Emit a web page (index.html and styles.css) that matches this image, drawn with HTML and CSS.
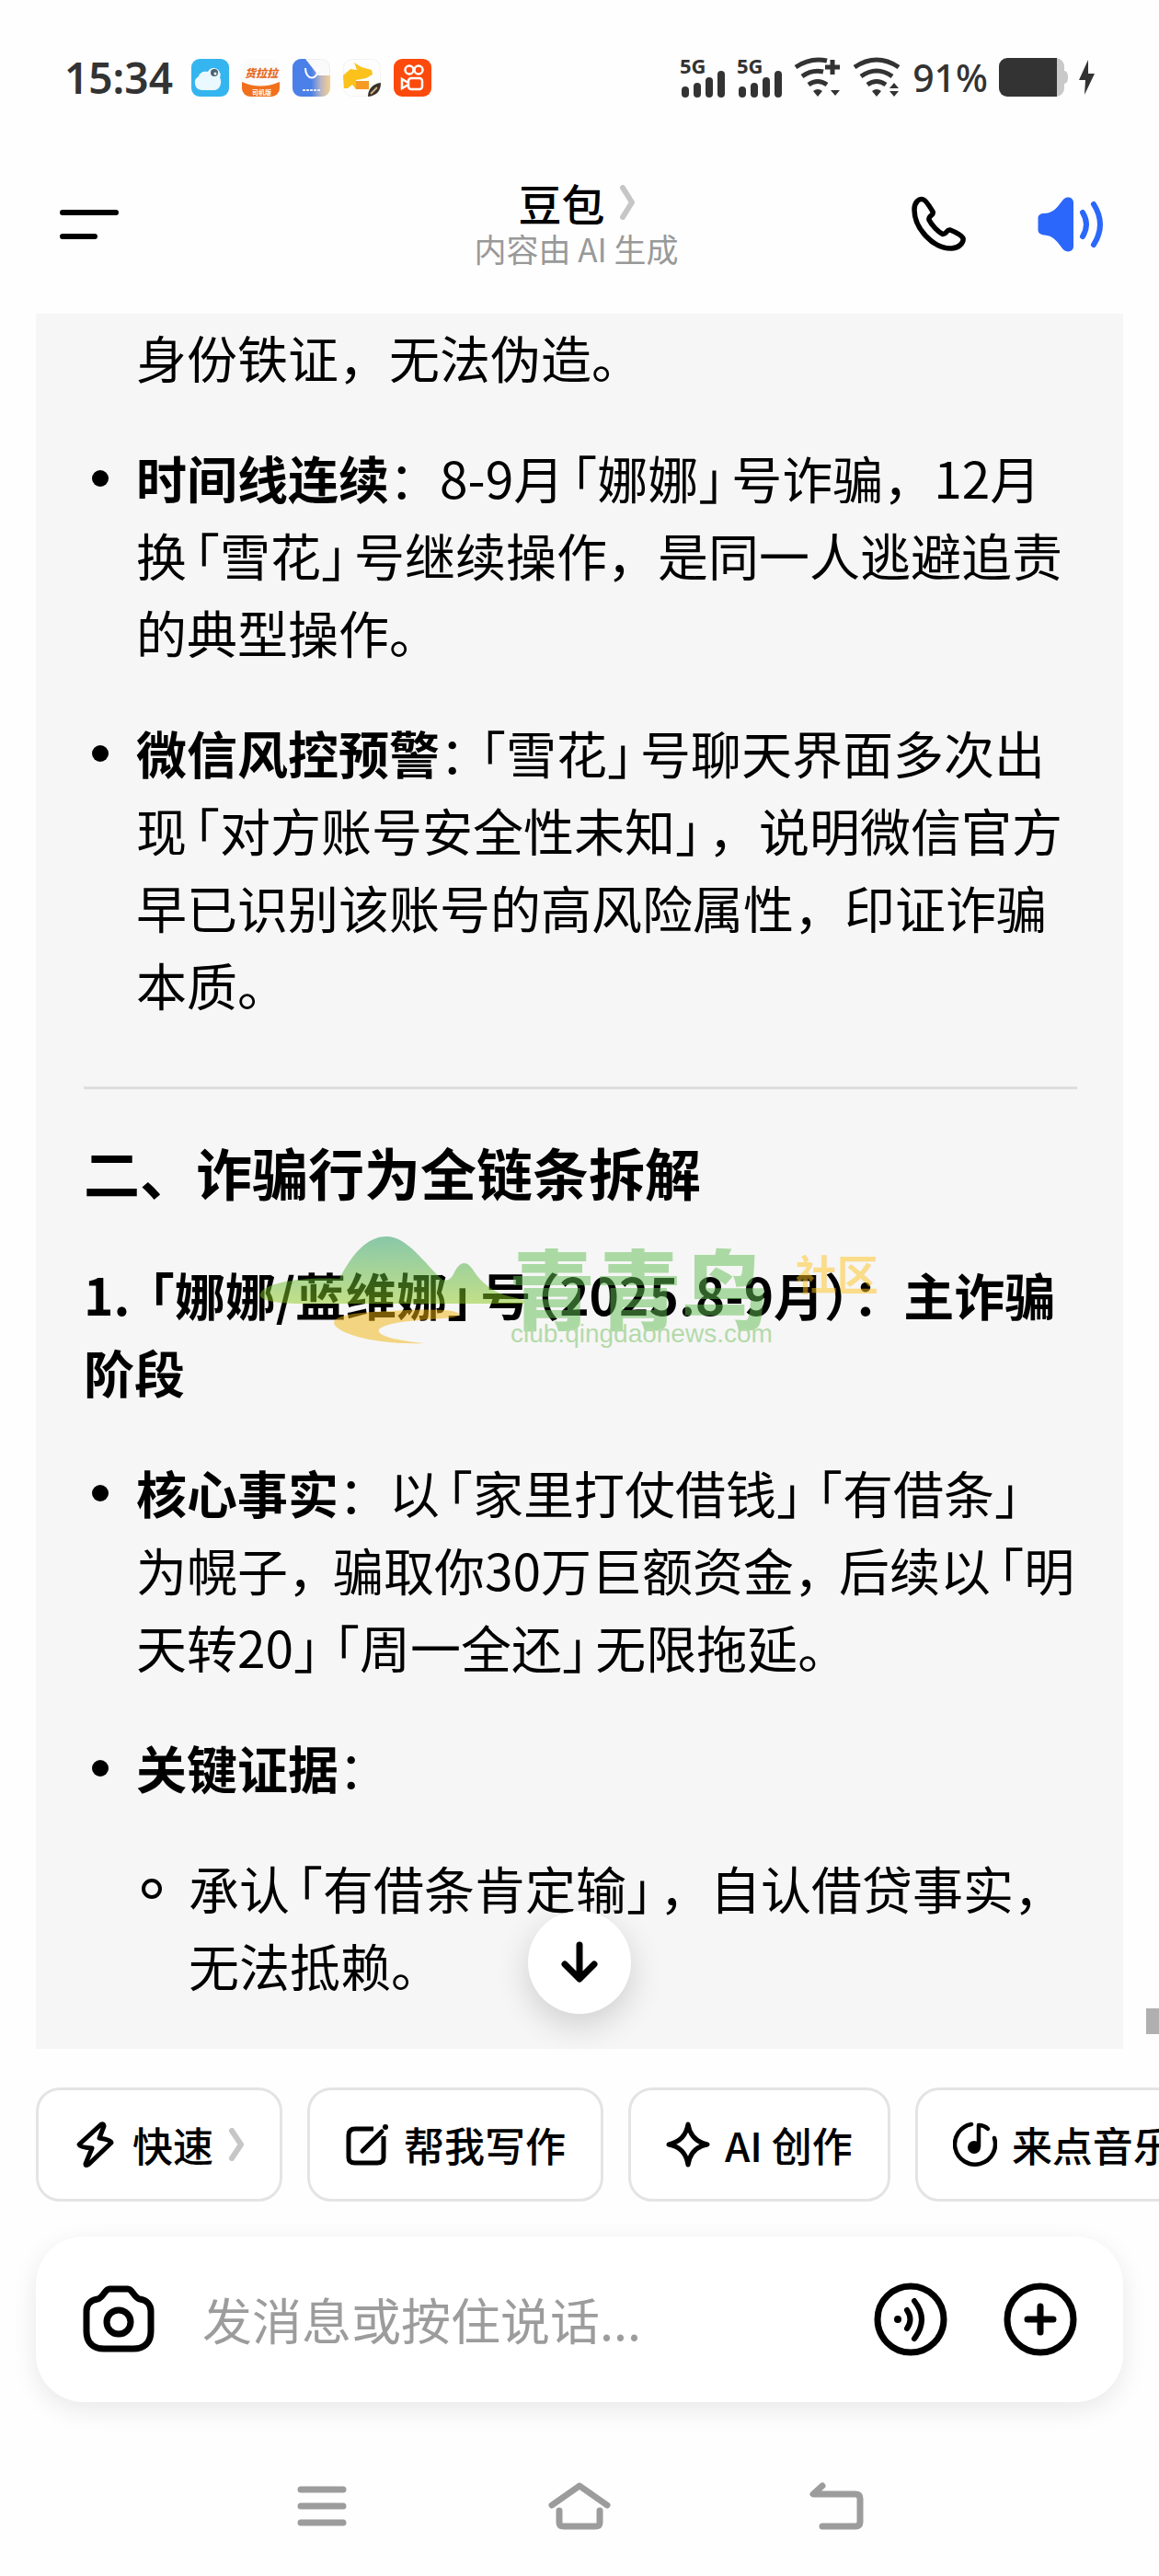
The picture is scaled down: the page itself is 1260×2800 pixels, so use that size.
FILE: index.html
```html
<!DOCTYPE html>
<html lang="zh-CN">
<head>
<meta charset="utf-8">
<meta name="viewport" content="width=device-width, initial-scale=1">
<title>豆包</title>
<link rel="stylesheet" href="styles.css">
</head>
<body>
<div class="app">
  <div class="status">
    <div class="status-group">
      <span class="clock">15:34</span>
      <div class="apps">
        <svg class="app-icon" viewBox="0 0 41 41"><rect width="41" height="41" rx="9" fill="#35b5ef"/><path d="M12 34a8 8 0 0 1-4-15c1-4 5-6 10-5a7 7 0 0 1 13 1c1 2 1 3 0 5 3 6 0 13-5 14z" fill="#eaf8ff"/><circle cx="25" cy="15" r="4" fill="#4b6370"/><circle cx="26" cy="16" r="1.500" fill="#fff"/></svg>
        <svg class="app-icon" viewBox="0 0 41 41"><defs><clipPath id="c1"><rect width="41" height="41" rx="9"/></clipPath></defs><g clip-path="url(#c1)"><rect width="41" height="41" fill="#fbfbfb"/><path d="M0 25Q20 34 41 25V41H0z" fill="#f0701c"/><text x="3" y="20" class="tiny-a">货拉拉</text><text x="11" y="39" class="tiny-b">司机版</text></g></svg>
        <svg class="app-icon" viewBox="0 0 41 41"><defs><linearGradient id="g1" x1="0" y1="0" x2="1" y2="0"><stop offset="0.500" stop-color="#4a80e8"/><stop offset="0.750" stop-color="#b9b5c4"/><stop offset="1" stop-color="#f9cf8c"/></linearGradient></defs><rect x="0.500" y="0.500" width="40" height="40" rx="9" fill="#fafafa" stroke="#eee"/><path d="M9 0H14L28 18H41V32a9 9 0 0 1-9 9H9a9 9 0 0 1-9-9V9a9 9 0 0 1 9-9z" fill="url(#g1)"/><path d="M14 10C14 24 28 24 28 10" fill="none" stroke="#fff" stroke-width="2"/><path d="M11 34H31" stroke="#dfe8fa" stroke-width="2" stroke-dasharray="3 1"/></svg>
        <svg class="app-icon" viewBox="0 0 41 41"><rect x="0.500" y="0.500" width="40" height="40" rx="9" fill="#fdfdfd" stroke="#f3f3f3"/><path d="M0 18 8 11 15 12 12 4 20 9 31 12 32 17 25 21 14 23V33L10 28 5 32H1z" fill="#fbc21c"/><path d="M14 24H28V33H14z" fill="#f59a22"/><path d="M27 41C27 33 32 27 41 26 41 34 37 40 27 41z" fill="#3a3026"/><path d="M30 38 37 31" stroke="#c9b48c" stroke-width="2"/></svg>
        <svg class="app-icon" viewBox="0 0 41 41"><rect width="41" height="41" rx="9" fill="#fb4a0c"/><g fill="none" stroke="#fff" stroke-width="2.500"><circle cx="17" cy="12" r="4.500"/><circle cx="27" cy="12" r="4.500"/><rect x="16" y="21" width="15" height="12" rx="3"/><path d="M16 26 9 22V32L16 28"/></g></svg>
      </div>
    </div>
    <div class="status-group signals">
      <svg width="50" height="44" viewBox="0 0 50 44"><text x="0" y="18" class="net">5G</text><path d="M6 36V40M19 32V40M32 26V40M45 19V40" stroke="#333" stroke-width="8" stroke-linecap="round"/></svg>
      <svg width="50" height="44" viewBox="0 0 50 44"><text x="0" y="18" class="net">5G</text><path d="M6 36V40M19 32V40M32 26V40M45 19V40" stroke="#333" stroke-width="8" stroke-linecap="round"/></svg>
      <svg width="52" height="44" viewBox="0 0 52 44"><g fill="none" stroke="#333" stroke-width="5"><path d="M2 11Q18 0 36 4M9 21Q20 13 32 16M16 30Q26 23 36 30M34 11H50M42 3V19"/></g><path d="M21 37Q26 33 31 37L26 43zM40 36H50L45 42z" fill="#333"/></svg>
      <svg width="53" height="44" viewBox="0 0 53 44"><g fill="none" stroke="#333" stroke-width="5"><path d="M2 11Q26-5 50 11M9 21Q26 9 43 21M16 30Q26 23 36 30"/></g><path d="M21 37Q26 33 31 37L26 43zM40 34 45 28 50 34zM40 37H50L45 43z" fill="#333"/></svg>
      <span class="percent">91%</span>
      <svg width="75" height="42" viewBox="0 0 75 42"><path d="M58 0h4a9 9 0 0 1 9 9v5q4 0 4 7t-4 7v5a9 9 0 0 1-9 9h-4z" fill="#c9c9c9"/><path d="M9 0H63V42H9a9 9 0 0 1-9-9V9a9 9 0 0 1 9-9z" fill="#333"/></svg>
      <svg width="17" height="38" viewBox="0 0 17 38"><path d="M10 0 0 22H7L6 38 17 15H10z" fill="#333"/></svg>
    </div>
  </div>

  <header class="topbar">
    <button class="icon-btn" aria-label="菜单"><svg width="64" height="34" viewBox="0 0 64 34"><path d="M3 4H61M3 30H38" stroke="#000" stroke-width="6" stroke-linecap="round"/></svg></button>
    <div class="heading">
      <h1 class="name">豆包<svg width="16" height="38" viewBox="0 0 16 38"><path d="M3 3 13 19 3 35" fill="none" stroke="#c6c6c6" stroke-width="6" stroke-linecap="round" stroke-linejoin="round"/></svg></h1>
      <p class="sub">内容由 AI 生成</p>
    </div>
    <div class="actions">
      <button class="icon-btn" aria-label="通话"><svg width="64" height="64" viewBox="0 0 64 64"><path d="M6 16C6 8 11 3 16 5 19 6 23 13 26 18 28 22 21 22 22 27 25 33 32 40 37 42.500 41 43 41 37 45 38 50 40 57 43 59 47 60 52 54 58 46 58 26 58 6 36 6 16z" fill="none" stroke="#000" stroke-width="5.500" stroke-linejoin="round"/></svg></button>
      <button class="icon-btn" aria-label="朗读"><svg width="76" height="64" viewBox="0 0 76 64"><path d="M9 20C22 20 26 8 31 4 35 1 41 3 41 8V56C41 61 35 63 31 60 26 56 22 44 9 43.500 5 43 2.500 41 2.500 38V25C2.500 22 5 20 9 20z" fill="#2b67fa"/><path d="M51 19Q59 32 51 45M63 10Q77 32 63 54" fill="none" stroke="#2b67fa" stroke-width="6" stroke-linecap="round"/></svg></button>
    </div>
  </header>

  <main class="stage">
    <article class="panel">
      <p class="lead">身份铁证，无法伪造。</p>
      <ul class="list">
        <li><strong>时间线连续</strong>：8-9月<span class="ob">「</span>娜娜<span class="cb">」</span>号诈骗，12月换<span class="ob">「</span>雪花<span class="cb">」</span>号继续操作，是同一人逃避追责的典型操作。</li>
        <li><strong>微信风控预警</strong><span class="cb">：</span><span class="ob">「</span>雪花<span class="cb">」</span>号聊天界面多次出现<span class="ob">「</span>对方账号安全性未知<span class="cb">」</span>，说明微信官方早已识别该账号的高风险属性，印证诈骗本质。</li>
      </ul>
      <hr class="rule">
      <h2 class="h2">二、诈骗行为全链条拆解</h2>
      <h3 class="h3">1. <span class="ob">「</span>娜娜/蓝维娜<span class="cb">」</span>号<span class="op">（</span>2025.8-9月<span class="cp">）</span>：主诈骗阶段</h3>
      <ul class="list">
        <li><strong>核心事实</strong>：以<span class="ob">「</span>家里打仗借钱<span class="cb">」</span><span class="ob">「</span>有借条<span class="cb">」</span><br>为幌子<span class="cm">，</span>骗取你30万巨额资金<span class="cm">，</span>后续以<span class="ob">「</span>明天转20<span class="cb">」</span><span class="ob">「</span>周一全还<span class="cb">」</span>无限拖延。</li>
        <li><strong>关键证据</strong>：
          <ul class="list sublist">
            <li>承认<span class="ob">「</span>有借条肯定输<span class="cb">」</span>，自认借贷事实，无法抵赖。</li>
          </ul>
        </li>
      </ul>
      <svg class="watermark" width="690" height="130" viewBox="0 0 690 130">
        <defs><linearGradient id="wm" x1="0" y1="0" x2="0" y2="1"><stop offset="0" stop-color="#1f9a5e"/><stop offset="1" stop-color="#8fcb1c"/></linearGradient></defs>
        <path d="M8 62C18 53 50 47 92 49 106 22 122 3 143 3 166 3 184 32 204 50Q211 53 216 44C223 29 230 29 237 39 243 49 256 62 270 66 282 70 296 72 304 76H44Q-4 74 8 62z" fill="url(#wm)"/>
        <path d="M148 84Q215 80 222 87C224 93 190 92 160 96 118 102 130 114 184 119 130 121 88 108 86 97 86 88 116 85 148 84z" fill="#f2b40c"/>
        <text x="276" y="97" class="wm-name">青青鸟</text>
        <text x="588" y="62" class="wm-side">社区</text>
        <text x="278" y="118" class="wm-url">club.qingdaonews.com</text>
      </svg>
    </article>
    <button class="jump" aria-label="回到底部"><svg width="40" height="46" viewBox="0 0 40 46"><path d="M20 4V40M4 25 20 41 36 25" fill="none" stroke="#000" stroke-width="7" stroke-linecap="round" stroke-linejoin="round"/></svg></button>
    <span class="thumb"></span>
  </main>

  <div class="chips">
    <button class="chip"><svg width="48" height="52" viewBox="0 0 48 52"><path d="M30 4 6 26Q7 29 20 30L13 47Q13 50 17 47L41 24Q41 21 28 19L33 6Q33 3 30 4z" fill="none" stroke="#000" stroke-width="5" stroke-linejoin="round"/></svg>快速<svg width="18" height="36" viewBox="0 0 18 36"><path d="M4 3 14 18 4 33" fill="none" stroke="#c6c6c6" stroke-width="6" stroke-linecap="round" stroke-linejoin="round"/></svg></button>
    <button class="chip"><svg width="48" height="52" viewBox="0 0 48 52"><path d="M31 9H11Q4 9 4 16V40Q4 46 11 46H35Q42 46 42 40V17" fill="none" stroke="#000" stroke-width="5"/><path d="M19 33 40 12" stroke="#000" stroke-width="5" stroke-linecap="round"/><circle cx="44" cy="7" r="3" /></svg>帮我写作</button>
    <button class="chip"><svg width="48" height="52" viewBox="0 0 48 52"><path d="M24 4Q27 22 45 26 27 29 24 48 21 29 3 26 21 22 24 4z" fill="none" stroke="#000" stroke-width="5" stroke-linejoin="round"/></svg>AI 创作</button>
    <button class="chip"><svg width="48" height="52" viewBox="0 0 48 52"><path d="M20 4A22 22 0 1 0 45 19" fill="none" stroke="#000" stroke-width="4.500" stroke-linecap="round"/><circle cx="23" cy="29" r="7"/><path d="M28 28V5Q34 5 38 9" fill="none" stroke="#000" stroke-width="4.500" stroke-linecap="round" stroke-linejoin="round"/></svg>来点音乐</button>
  </div>

  <form class="composer">
    <button type="button" class="icon-btn" aria-label="拍照"><svg width="80" height="80" viewBox="0 0 80 80"><g fill="none" stroke="#000" stroke-width="7"><path d="M30 7H50C55 7 57 17 63 18 70 19 75 24 75 31V53C75 65 68 72 56 72H24C12 72 5 65 5 53V31C5 24 10 19 17 18 23 17 25 7 30 7Z"/><circle cx="40" cy="43" r="13"/></g></svg></button>
    <input class="field" type="text" aria-label="发消息" placeholder="发消息或按住说话...">
    <button type="button" class="icon-btn" aria-label="语音"><svg width="80" height="80" viewBox="0 0 80 80"><circle cx="40" cy="40" r="36" fill="none" stroke="#000" stroke-width="7"/><circle cx="26" cy="40" r="4"/><path d="M36 30Q43 40 36 50M44 20Q60 40 44 61" fill="none" stroke="#000" stroke-width="6" stroke-linecap="round"/></svg></button>
    <button type="button" class="icon-btn" aria-label="更多"><svg width="80" height="80" viewBox="0 0 80 80"><circle cx="40" cy="40" r="36" fill="none" stroke="#000" stroke-width="7"/><path d="M40 26V54M26 40H54" stroke="#000" stroke-width="7" stroke-linecap="round"/></svg></button>
  </form>

  <nav class="sysnav">
    <button class="icon-btn" aria-label="最近任务"><svg width="72" height="54" viewBox="0 0 72 54"><path d="M13 9H59M13 27H59M13 45H59" stroke="#9c9c9c" stroke-width="7" stroke-linecap="round"/></svg></button>
    <button class="icon-btn" aria-label="主页"><svg width="72" height="54" viewBox="0 0 72 54"><path d="M6 26 36 5 66 26M14 32V45Q14 49 19 49H53Q58 49 58 45V32" fill="none" stroke="#9c9c9c" stroke-width="7" stroke-linecap="round" stroke-linejoin="round"/></svg></button>
    <button class="icon-btn" aria-label="返回"><svg width="72" height="54" viewBox="0 0 72 54"><path d="M20 5 10 14H56Q61 14 61 19V44Q61 49 56 49H20" fill="none" stroke="#9c9c9c" stroke-width="7" stroke-linecap="round" stroke-linejoin="round"/></svg></button>
  </nav>
</div>
</body>
</html>
```
FILE: styles.css
```css
*,
*::before {
  box-sizing: border-box;
  margin: 0;
  padding: 0;
}

body {
  background: #fefefe;
  color: #000;
  font-family: "Noto Sans CJK SC", sans-serif;
  overflow-x: hidden;
}

button {
  border: 0;
  background: none;
  color: inherit;
  font: inherit;
}

svg {
  display: block;
  flex: none;
}

.app {
  display: flex;
  flex-direction: column;
  min-height: 100vh;
}

/* system status bar */
.status {
  display: flex;
  justify-content: space-between;
  align-items: center;
  padding: 50px 70px 48px;
  color: #333;
  font-family: "Noto Sans", sans-serif;
}

.status-group {
  display: flex;
  align-items: center;
  gap: 20px;
}

.clock {
  font-size: 46px;
  line-height: 68px;
  font-weight: 600;
}

.percent {
  font-size: 41px;
  line-height: 68px;
  font-weight: 500;
}

.apps {
  display: flex;
  gap: 14px;
}

.app-icon {
  width: 41px;
  height: 41px;
}

.signals {
  gap: 12px;
}

.net {
  font: 700 22px/1 "Noto Sans", sans-serif;
  fill: #333;
}

.tiny-a {
  font: italic 900 12px "Noto Sans CJK SC", sans-serif;
  fill: #e5691e;
}

.tiny-b {
  font: 700 7px "Noto Sans CJK SC", sans-serif;
  fill: #fff;
}

/* chat title bar */
.topbar {
  display: grid;
  grid-template-columns: 1fr auto 1fr;
  align-items: center;
  padding: 24px 58px 43px 65px;
}

.icon-btn {
  flex: none;
  justify-self: start;
}

.heading {
  display: flex;
  flex-direction: column;
  align-items: center;
  padding-right: 14px;
}

.name {
  display: flex;
  align-items: center;
  gap: 16px;
  font-size: 47px;
  line-height: 60px;
  font-weight: 500;
}

.sub {
  padding-bottom: 8px;
  font-size: 35px;
  line-height: 40px;
  color: #999;
}

.actions {
  display: flex;
  justify-content: flex-end;
  align-items: center;
  gap: 74px;
}

/* conversation */
.stage {
  position: relative;
  padding: 0 39px;
}

.panel {
  position: relative;
  padding: 4px 40px 50px 52px;
  background: #f6f6f6;
  font-size: 55px;
  line-height: 84px;
  text-spacing-trim: space-all;
}

.lead {
  padding-left: 57px;
}

.list {
  list-style: none;
  padding-left: 57px;
}

.list > li {
  position: relative;
  margin-top: 47px;
}

.list > li::before {
  content: "";
  position: absolute;
  left: -48px;
  top: 35px;
  width: 18px;
  height: 18px;
  border-radius: 50%;
  background: #000;
}

.sublist > li::before {
  left: -51px;
  top: 33px;
  width: 22px;
  height: 22px;
  border: 4px solid #000;
  background: none;
}

strong {
  font-weight: 700;
}

/* punctuation set narrower than a full character */
.ob {
  margin-left: -19px;
}

.cb {
  margin-right: -19px;
}

.op {
  margin-left: -24px;
}

.cp {
  margin-right: -24px;
}

.cm {
  margin-right: -6px;
}

.rule {
  height: 3px;
  margin: 70px 10px 0 0;
  border: 0;
  background: #dedede;
}

.h2 {
  margin-top: 44px;
  font-size: 61px;
  line-height: 92px;
  font-weight: 700;
}

.h3 {
  margin-top: 44px;
  font-size: 55px;
  line-height: 84px;
  font-weight: 700;
}

.watermark {
  position: absolute;
  left: 238px;
  top: 1000px;
  opacity: 0.5;
  pointer-events: none;
}

.wm-name {
  font: 900 94px/1 "Noto Sans CJK SC", sans-serif;
  fill: #62bd52;
}

.wm-side {
  font: 700 45px/1 "Noto Sans CJK SC", sans-serif;
  fill: #ffc31f;
}

.wm-url {
  font: 400 28px/1 "Liberation Sans", sans-serif;
  fill: #72c05c;
}

.jump {
  position: absolute;
  left: 50%;
  bottom: 38px;
  display: grid;
  place-items: center;
  width: 112px;
  height: 112px;
  margin-left: -56px;
  border-radius: 50%;
  background: #fff;
  box-shadow: 0 12px 36px rgba(0, 0, 0, 0.16);
}

.thumb {
  position: absolute;
  right: 0;
  bottom: 16px;
  width: 14px;
  height: 28px;
  background: #b0b0b0;
}

/* shortcut chips */
.chips {
  display: flex;
  gap: 27px;
  padding: 42px 0 0 39px;
  overflow: hidden;
}

.chip {
  display: flex;
  flex: none;
  align-items: center;
  gap: 16px;
  padding: 26px 38px;
  border: 3px solid #e4e4e4;
  border-radius: 26px;
  background: #fff;
  font-size: 44px;
  line-height: 66px;
  font-weight: 500;
  white-space: nowrap;
}

/* message box */
.composer {
  display: flex;
  align-items: center;
  gap: 61px;
  margin: 38px 39px 0;
  padding: 50px;
  border-radius: 52px;
  background: #fff;
  box-shadow: 0 8px 28px rgba(0, 0, 0, 0.09);
}

.field {
  flex: 1;
  min-width: 0;
  height: 80px;
  margin-left: -10px;
  border: 0;
  outline: 0;
  background: none;
  font: 400 54px/80px "Noto Sans CJK SC", sans-serif;
}

.field::placeholder {
  color: #9c9c9c;
  opacity: 1;
}

/* system navigation */
.sysnav {
  display: flex;
  justify-content: center;
  gap: 208px;
  padding: 86px 0 46px;
}
```
